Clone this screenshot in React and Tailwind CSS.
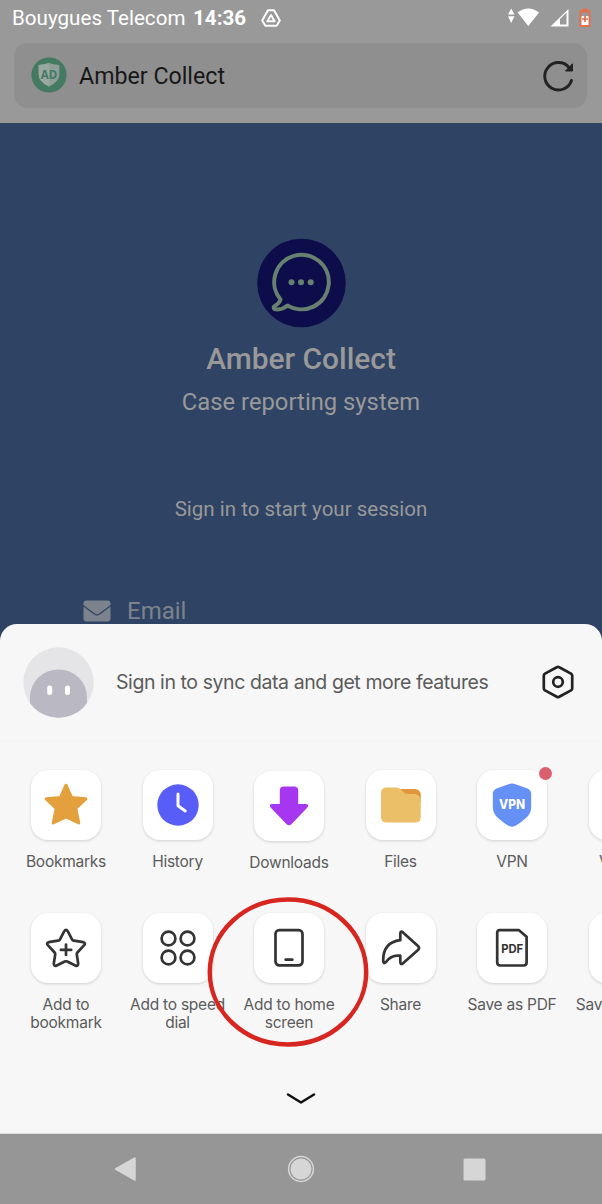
const ink = "#333333";

function StarIcon() {
  return (
    <svg width="44" height="42" viewBox="0 0 44 42" className="-mt-[3px]">
      <path d="M22 2.200 L27.600 14.600 L41.800 15.800 L31.800 25.500 L34.800 40 L22 34 L9.200 40 L12.200 25.500 L2.200 15.800 L16.400 14.600 Z" fill="#e3a03c" stroke="#e3a03c" strokeWidth="3" strokeLinejoin="round" />
    </svg>
  );
}

function ClockIcon() {
  return (
    <svg width="42" height="42" viewBox="0 0 42 42">
      <circle cx="21" cy="21" r="20.7" fill="#575df6" />
      <path d="M21 10 V21.8 L28.3 27" fill="none" stroke="#fff" strokeWidth="3" strokeLinecap="round" strokeLinejoin="round" />
    </svg>
  );
}

function ArrowIcon() {
  return (
    <svg width="40" height="40" viewBox="0 0 40 40">
      <path d="M15 .5 H25 Q29.2 .5 29.2 4.7 V18 H37 Q40.5 18.6 38.4 21.4 L22.4 38.3 Q20 40.4 17.6 38.3 L1.6 21.4 Q-.5 18.6 3 18 H10.800 V4.700 Q10.800 .5 15 .5 Z" fill="#a636f0" />
    </svg>
  );
}

function FolderIcon() {
  return (
    <svg width="40" height="36" viewBox="0 0 40 36">
      <path d="M14 2 H33.500 Q39.800 2 39.800 8.500 V15 H26 Z" fill="#e1963b" />
      <path d="M5.500 .5 H15.500 Q18 .5 20 2.500 L22.500 5.200 Q24.300 7 27 7 H33.500 Q37.600 7 39.800 12 V30 Q39.800 35.500 34.300 35.500 H5.500 Q0 35.500 0 30 V6 Q0 .5 5.500 .5 Z" fill="#ebbe68" />
    </svg>
  );
}

function VpnIcon() {
  return (
    <svg width="40" height="44" viewBox="0 0 40 44">
      <path d="M16.500 1.200 Q20 -.2 23.500 1.200 L35.500 5.500 Q39.200 7 39.200 11 V24 Q39.200 30.500 34 35 Q27 41 23 43 Q20 44.400 17 43 Q13 41 6 35 Q.8 30.500 .8 24 V11 Q.8 7 4.500 5.500 Z" fill="#6591f7" />
      <text x="20" y="26" textAnchor="middle" textLength="26" lengthAdjust="spacingAndGlyphs" fontFamily="Inter, sans-serif" fontWeight="800" fontSize="12.500" fill="#fff">VPN</text>
    </svg>
  );
}

function StarPlusIcon() {
  return (
    <svg width="42" height="40" viewBox="0 0 42 40" fill="none" stroke={ink} strokeWidth="2.700" strokeLinecap="round" strokeLinejoin="round">
      <path d="M19.300 3.200 Q21 .3 22.700 3.200 L27 11.300 Q27.600 12.500 29 12.700 L38.300 14.200 Q41 15 39.200 17.200 L32.400 24.500 Q31.600 25.400 31.800 26.600 L33.200 35.500 Q33 38.800 30.300 37.500 L22.200 33.500 Q21 33 19.800 33.500 L11.700 37.500 Q9 38.800 8.800 35.500 L10.200 26.600 Q10.400 25.400 9.600 24.500 L2.800 17.200 Q1 15 3.700 14.200 L13 12.700 Q14.400 12.500 15 11.300 Z" />
      <path d="M21 16.600 V27 M15.800 21.800 H26.200" />
    </svg>
  );
}

function DialIcon() {
  return (
    <svg width="36" height="36" viewBox="0 0 36 36" fill="none" stroke={ink} strokeWidth="2.700">
      <circle cx="8.500" cy="8.500" r="6.900" />
      <circle cx="27.500" cy="8.500" r="6.900" />
      <circle cx="8.500" cy="27.500" r="6.900" />
      <circle cx="27.500" cy="27.500" r="6.900" />
    </svg>
  );
}

function PhoneIcon() {
  return (
    <svg width="32" height="40" viewBox="0 0 32 40" fill="none" stroke={ink} strokeWidth="2.700" strokeLinecap="round">
      <rect x="2.500" y="2.200" width="27" height="35.200" rx="3.800" />
      <path d="M12.700 31.700 H19.300" />
    </svg>
  );
}

function ShareIcon() {
  return (
    <svg width="40" height="36" viewBox="0 0 40 36" fill="none" stroke={ink} strokeWidth="2.700" strokeLinejoin="round">
      <path d="M19.300 3.600 Q19.400 .5 22 2.400 L37 16 Q39 18 37 20 L22 33.300 Q19.400 35.200 19.300 32 V25.700 Q10 24.600 5 32 Q2.400 34.500 2.200 31 Q1.800 12.500 19.300 10.200 Z" />
    </svg>
  );
}

function PdfIcon() {
  return (
    <svg width="34" height="40" viewBox="0 0 34 40">
      <path d="M4.500 2.200 H24 L31.600 8.800 V34.500 Q31.600 37.500 28.600 37.500 H5.400 Q2.200 37.500 2.200 34.500 V5 Q2.200 2.200 4.500 2.200 Z" fill="none" stroke={ink} strokeWidth="2.700" strokeLinejoin="round" />
      <text x="17.200" y="25" textAnchor="middle" textLength="22" lengthAdjust="spacingAndGlyphs" fontFamily="Inter, sans-serif" fontWeight="700" fontSize="12" fill={ink}>PDF</text>
    </svg>
  );
}

function Tile({ icon, lines, badge, className = "" }) {
  return (
    <div className={"flex flex-col items-center " + className}>
      <div className="relative flex h-[70px] w-[70px] items-center justify-center rounded-[17px] bg-white shadow-[0_1px_3px_rgba(0,0,0,0.16)]">
        {icon}
        {badge && <span className="absolute -top-[3px] -right-[5px] h-[13px] w-[13px] rounded-full bg-[#dc5f6f]" />}
      </div>
      <div className="mt-[13px] text-center text-[15.500px] leading-[17.500px] tracking-[-0.25px] whitespace-nowrap text-[#5b5b5b]">
        {lines.map((l) => (
          <div key={l}>{l}</div>
        ))}
      </div>
    </div>
  );
}

function StatusBar() {
  return (
    <div className="flex h-[37px] items-center pl-3 text-[20.600px] text-white">
      <span className="w-[181px] whitespace-nowrap">Bouygues Telecom</span>
      <span className="w-[68px] font-bold">14:36</span>
      <svg className="mb-px" width="20" height="18" viewBox="0 0 20 18" fill="none" stroke="#fff" strokeWidth="2" strokeLinejoin="round">
        <path d="M7 1.200 H13 L18.800 11.500 L15.600 16.800 H4.400 L1.200 11.500 Z" />
        <path d="M10 6 L13.700 12.200 H6.300 Z" />
      </svg>
      <svg className="mr-[11px] mb-[2px] ml-auto" width="84" height="22" viewBox="0 0 84 22">
        <path d="M1 7.500 L4.200 1.500 L7.500 7.500 Z M1 9.200 H7.500 L4.200 16 Z" fill="#fff" />
        <path d="M10.600 5.500 Q21.300 -2.300 32 5.500 L21.300 19 Z" fill="#fff" />
        <path d="M43.500 19.500 L61.500 2 V19.500 Z" fill="#fff" />
        <path d="M53 12 L59.500 5.500 V17.500 H53 Z" fill="#999" />
        <path d="M75.300 1.500 H80.700 V3.200 H83.500 V20 H72.500 V3.200 H75.300 Z" fill="#e1714c" />
        <path d="M74.500 5.500 H81.500 V9 H74.500 Z" fill="#999" />
        <path d="M74.500 9 H81.500 V18 H74.500 Z" fill="#fff" />
        <path d="M78 9 V15 M75 12 H81" stroke="#e1714c" strokeWidth="1.700" />
      </svg>
    </div>
  );
}

export default function App() {
  return (
    <div className="relative flex h-[1204px] w-[602px] flex-col overflow-hidden bg-[#999999] font-['Roboto',sans-serif]">
      <StatusBar />
      <div className="mr-[15px] ml-[14px] mt-[6px] flex h-[65px] items-center rounded-[14px] bg-[#8f8f8f] pr-[12px] pl-[17px]">
        <svg className="mb-px" width="36" height="36" viewBox="0 0 36 36">
          <circle cx="18" cy="18" r="17.600" fill="#457a62" />
          <path d="M18 6 Q22 7.600 28.300 8 V18 Q28 25 18 29.500 Q8 25 7.700 18 V8 Q14 7.600 18 6 Z" fill="#8f9f97" />
          <path d="M18 6 Q14 7.600 7.700 8 V18 Q8 25 18 29.500 Z" fill="#99a8a1" />
          <text x="18" y="21.500" textAnchor="middle" fontSize="11.500" fontWeight="700" fontFamily="Open Sans, sans-serif" fill="#457a62">AD</text>
        </svg>
        <span className="mt-[2px] ml-[12px] text-[23.200px] text-[#171717]">Amber Collect</span>
        <svg className="ml-auto" width="34" height="34" viewBox="0 0 34 34" fill="none" stroke="#222" strokeWidth="2.900">
          <path d="M30.500 21.500 A13.700 13.700 0 1 1 28 8.500" strokeLinecap="round" />
          <path d="M31.500 4.800 V12 H24.500 Z" fill="#222" strokeWidth="1" />
        </svg>
      </div>

      <main className="mt-[15px] flex h-[520px] shrink-0 flex-col items-center bg-[#2f4364] pt-[115px] text-[#999999]">
        <svg width="90" height="90" viewBox="0 0 90 90">
          <circle cx="45.500" cy="45" r="44.300" fill="#0d0d4b" />
          <path d="M24.500 61.500 A27.300 27.300 0 1 1 31.500 67.500 Q25 72.700 18.500 71 Q16.500 69 19.500 67.500 Q23.500 65 24.500 61.500 Z" fill="none" stroke="#67806f" strokeWidth="4" strokeLinejoin="round" />
          <circle cx="35.500" cy="44.300" r="3" fill="#67806f" />
          <circle cx="45" cy="44.300" r="3" fill="#67806f" />
          <circle cx="54.700" cy="44.300" r="3" fill="#67806f" />
        </svg>
        <h1 className="mt-[11px] text-[29.900px] leading-[40px] font-medium">Amber Collect</h1>
        <p className="mt-[8px] text-[23.800px] leading-[30px]">Case reporting system</p>
        <p className="mt-[78px] text-[20.500px] leading-[28px]">Sign in to start your session</p>
        <div className="mt-[72px] flex w-full items-center pl-[83px] text-[24px] leading-[32px] text-[#7c838c]">
          <svg width="28" height="22" viewBox="0 0 28 22">
            <rect x=".5" y=".5" width="27" height="21" rx="3" fill="#7c838c" />
            <path d="M0 5.500 L11.500 14 Q14 16 16.500 14 L28 5.500" fill="none" stroke="#2f4364" strokeWidth="1.300" />
          </svg>
          <span className="ml-[16px]">Email</span>
        </div>
      </main>

      <section className="relative -mt-[19px] h-[510px] shrink-0 rounded-t-[17px] border-b border-[#dddddd] bg-[#f7f7f7] font-['Inter',sans-serif]">
        <div className="flex h-[118px] items-center border-b border-[#f1f1f1] pr-[28px] pl-[23px]">
          <svg width="71" height="71" viewBox="0 0 71 71">
            <defs>
              <clipPath id="avatar">
                <circle cx="35.500" cy="35.500" r="35.200" />
              </clipPath>
            </defs>
            <circle cx="35.500" cy="35.500" r="35.200" fill="#e5e5e7" />
            <path d="M7 80 V50 A28.500 27.500 0 0 1 64 50 V80 Z" fill="#bab8c2" clipPath="url(#avatar)" />
            <rect x="24.200" y="38.500" width="5" height="9.500" rx="2.500" fill="#fff" />
            <rect x="42" y="38.500" width="5" height="9.500" rx="2.500" fill="#fff" />
          </svg>
          <span className="ml-[22px] text-[19.500px] tracking-[-0.42px] whitespace-nowrap text-[#5b5b5b]">Sign in to sync data and get more features</span>
          <svg className="mb-px ml-auto" width="32" height="34" viewBox="0 0 32 34" fill="none" stroke="#222" strokeWidth="2.700" strokeLinejoin="round">
            <path d="M14.800 2.200 Q16 1.500 17.200 2.200 L29 8.600 Q30.200 9.300 30.200 10.700 V23.300 Q30.200 24.700 29 25.400 L17.200 31.800 Q16 32.500 14.800 31.800 L3 25.400 Q1.800 24.700 1.800 23.300 V10.700 Q1.800 9.300 3 8.600 Z" />
            <circle cx="16" cy="17" r="4.800" />
          </svg>
        </div>
        <div className="h-[330px] overflow-hidden pt-[28px] pl-[10.250px]">
          <div className="grid h-[143px] w-[669px] grid-cols-6">
            <Tile icon={<StarIcon />} lines={["Bookmarks"]} />
            <Tile icon={<ClockIcon />} lines={["History"]} />
            <Tile icon={<ArrowIcon />} lines={["Downloads"]} className="pt-px" />
            <Tile icon={<FolderIcon />} lines={["Files"]} />
            <Tile icon={<VpnIcon />} lines={["VPN"]} badge />
            <Tile lines={["Videos"]} />
          </div>
          <div className="grid w-[669px] grid-cols-6">
            <Tile icon={<StarPlusIcon />} lines={["Add to", "bookmark"]} />
            <Tile icon={<DialIcon />} lines={["Add to speed", "dial"]} />
            <Tile icon={<PhoneIcon />} lines={["Add to home", "screen"]} />
            <Tile icon={<ShareIcon />} lines={["Share"]} />
            <Tile icon={<PdfIcon />} lines={["Save as PDF"]} />
            <Tile lines={["Save page as", "offline"]} />
          </div>
        </div>
        <svg className="mx-auto mt-[20px]" width="30" height="14" viewBox="0 0 30 14">
          <path d="M2 2.500 L15 10.500 L28 2.500" fill="none" stroke="#111" strokeWidth="2.500" strokeLinecap="round" strokeLinejoin="round" />
        </svg>
        <svg className="absolute top-[272px] left-[206px]" width="166" height="152" viewBox="0 0 166 152">
          <ellipse cx="82" cy="76" rx="78.200" ry="72.500" fill="none" stroke="#d7261f" strokeWidth="4.500" />
        </svg>
      </section>

      <nav className="flex flex-1 items-center justify-between bg-[#969696] pr-[116px] pl-[114px]">
        <svg width="24" height="26" viewBox="0 0 24 26">
          <path d="M1.500 13 L21 2 V24 Z" fill="#d6d6d6" stroke="#d6d6d6" strokeWidth="1.500" strokeLinejoin="round" />
        </svg>
        <svg width="28" height="28" viewBox="0 0 28 28">
          <circle cx="14" cy="14" r="12.400" fill="none" stroke="#d6d6d6" strokeWidth="1.500" />
          <circle cx="14" cy="14" r="10.500" fill="#d6d6d6" />
        </svg>
        <svg width="23" height="23" viewBox="0 0 23 23">
          <rect x=".5" y=".5" width="22" height="22" rx="1.500" fill="#d6d6d6" />
        </svg>
      </nav>
    </div>
  );
}
